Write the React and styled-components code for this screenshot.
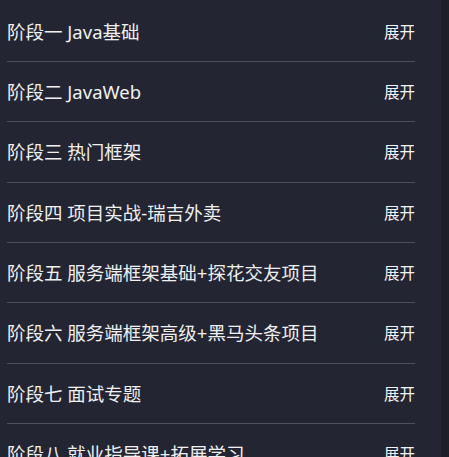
import React from "react";
import styled, { createGlobalStyle } from "styled-components";

const Global = createGlobalStyle`
  html, body { margin: 0; padding: 0; background: #1d1e27; }
  body { font-family: "Noto Sans", "Noto Sans CJK SC", sans-serif; }
`;

const Page = styled.div`
  display: flex;
  height: 457px;
  overflow: hidden;
`;

const Panel = styled.div`
  width: 441px;
  background: #232533;
  padding: 1.67px 26px 0 7px;
  box-sizing: border-box;
`;

const Track = styled.div`
  flex: 1;
  background: #1d1e27;
`;

const Row = styled.div`
  height: 60.33px;
  box-sizing: border-box;
  display: flex;
  align-items: center;
  justify-content: space-between;
  border-bottom: 1px solid #4d4f5c;
  padding-bottom: 1px;
`;

const Title = styled.span`
  font-size: 18.5px;
  font-weight: 400;
  color: #f0f0f0;
  font-family: "Noto Sans", "Noto Sans CJK SC", sans-serif;
`;

const Toggle = styled.span`
  font-size: 15.5px;
  font-weight: 400;
  color: #f4f4f4;
  font-family: "Noto Sans CJK SC", sans-serif;
`;

const stages = [
  "阶段一 Java基础",
  "阶段二 JavaWeb",
  "阶段三 热门框架",
  "阶段四 项目实战-瑞吉外卖",
  "阶段五 服务端框架基础+探花交友项目",
  "阶段六 服务端框架高级+黑马头条项目",
  "阶段七 面试专题",
  "阶段八 就业指导课+拓展学习",
];

export default function App() {
  return (
    <>
      <Global />
      <Page>
        <Panel>
          {stages.map((s) => (
            <Row key={s}>
              <Title>{s}</Title>
              <Toggle>展开</Toggle>
            </Row>
          ))}
        </Panel>
        <Track />
      </Page>
    </>
  );
}
